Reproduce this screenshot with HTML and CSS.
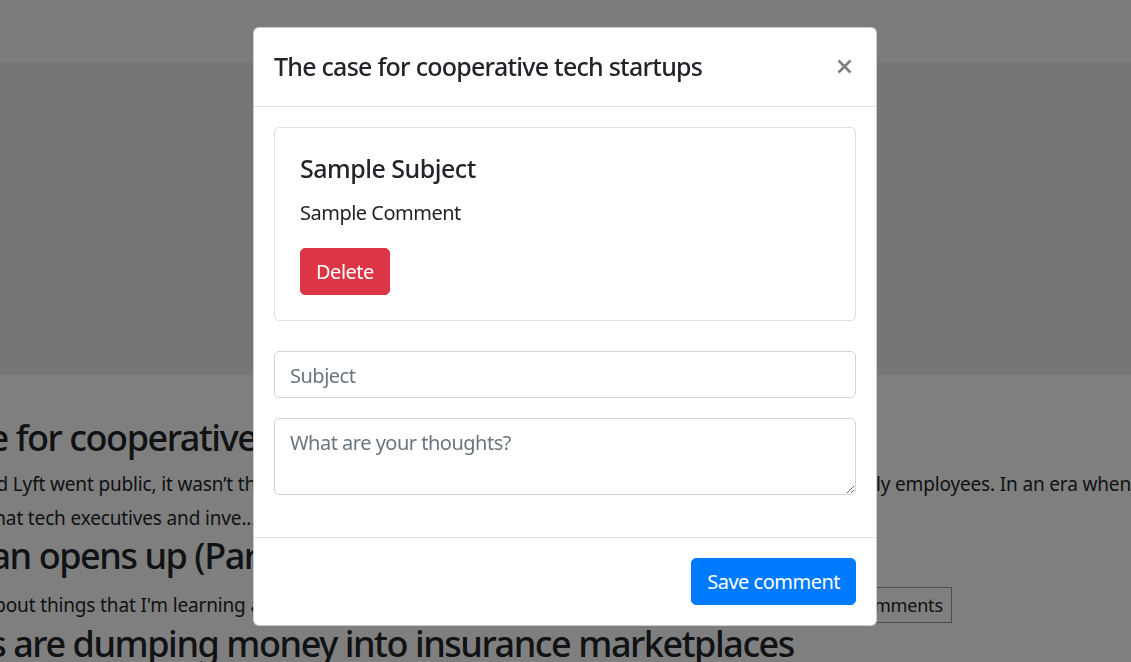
FILE: index.html
```html
<!DOCTYPE html>
<html lang="en">
<head>
<meta charset="utf-8">
<title>Blog</title>
<link rel="stylesheet" href="styles.css">
</head>
<body>
<nav class="navbar"></nav>
<header class="jumbotron"></header>
<main class="feed">
  <article class="post">
    <h3 class="post-title">The case for cooperative tech startups</h3>
    <p class="post-excerpt">When Uber and Lyft went public, it wasn’t the drivers who got richer. It was the investors, the founders, and the early employees. In an era when the gig economy keeps growing,<br>it’s now clear that tech executives and inve...</p>
  </article>
  <article class="post">
    <h3 class="post-title">A German opens up (Part 1)</h3>
    <div class="post-row">
      <p class="post-excerpt post-excerpt-short">Here I wrote about things that I'm learning as I go, mostly software and startups...</p>
      <button class="btn-comments" type="button">Comments</button>
    </div>
  </article>
  <article class="post">
    <h3 class="post-title">Advisors are dumping money into insurance marketplaces</h3>
  </article>
</main>

<div class="modal-backdrop"></div>
<div class="modal">
  <div class="modal-dialog">
    <div class="modal-content">
      <div class="modal-header">
        <h5 class="modal-title">The case for cooperative tech startups</h5>
        <button class="close" type="button" aria-label="Close">
          <svg class="close-icon" width="15" height="15" viewBox="0 0 15 15" aria-hidden="true">
            <path d="M1.5 1.5 L13.5 13.5 M13.5 1.5 L1.5 13.5" stroke="#000" stroke-width="2.6" fill="none"/>
          </svg>
        </button>
      </div>
      <div class="modal-body">
        <div class="card">
          <div class="card-body">
            <h5 class="card-title">Sample Subject</h5>
            <p class="card-text">Sample Comment</p>
            <button class="btn btn-danger" type="button">Delete</button>
          </div>
        </div>
        <form class="comment-form">
          <div class="form-group">
            <input class="form-control" type="text" placeholder="Subject">
          </div>
          <div class="form-group">
            <textarea class="form-control form-textarea" rows="2" placeholder="What are your thoughts?"></textarea>
          </div>
        </form>
      </div>
      <div class="modal-footer">
        <button class="btn btn-primary" type="button">Save comment</button>
      </div>
    </div>
  </div>
</div>
</body>
</html>
```

FILE: styles.css
```css
* {
  box-sizing: border-box;
}

html, body {
  margin: 0;
  padding: 0;
  overflow: hidden;
  height: 100%;
}

body {
  font-family: "Noto Sans", "Open Sans", sans-serif;
  font-size: 20px;
  line-height: 30px;
  color: #212529;
  background: #fff;
  letter-spacing: -0.025em;
}

.navbar {
  height: 62px;
  background: #f8f9fa;
}

.jumbotron {
  height: 313px;
  background: #e9ecef;
  margin-bottom: 42px;
}

.feed {
  width: 1600px;
  margin-left: -130px;
}

.post-title {
  margin: 0 0 8px;
  font-size: 36px;
  line-height: 42px;
  font-weight: 500;
  letter-spacing: -0.04em;
  white-space: nowrap;
}

.post-excerpt {
  margin: 0;
  font-size: 19px;
  line-height: 34px;
  letter-spacing: -0.008em;
  white-space: nowrap;
}

.post-row {
  display: flex;
  align-items: center;
  height: 36px;
  margin-top: 10px;
}

.post-excerpt-short {
  flex: 0 0 973px;
  overflow: hidden;
}

.btn-comments {
  font-family: inherit;
  font-size: 18px;
  line-height: 34px;
  letter-spacing: -0.01em;
  color: #212529;
  background: transparent;
  border: 1px solid #9a9a9a;
  padding: 0 8px;
  margin: 0;
}

/* Modal */
.modal-backdrop {
  position: fixed;
  inset: 0;
  background: rgba(0, 0, 0, 0.5);
}

.modal {
  position: fixed;
  inset: 0;
  padding-right: 1px;
}

.modal-dialog {
  width: 624px;
  margin: 27px auto 0;
}

.modal-content {
  background: #fff;
  border: 1px solid rgba(0, 0, 0, 0.2);
  border-radius: 6px;
}

.modal-header {
  display: flex;
  align-items: flex-start;
  justify-content: space-between;
  padding: 20px;
  border-bottom: 1px solid #dee2e6;
}

.modal-title {
  margin: 0;
  font-size: 25px;
  line-height: 37.5px;
  font-weight: 500;
  letter-spacing: -0.03em;
}

.close {
  display: flex;
  padding: 0;
  margin: 11px 4px 0 auto;
  border: 0;
  background: transparent;
  opacity: 0.5;
}

.close-icon {
  display: block;
}

.modal-body {
  padding: 20px 20px 22px;
}

.card {
  border: 1px solid rgba(0, 0, 0, 0.125);
  border-radius: 5px;
  margin-bottom: 30px;
}

.card-body {
  padding: 25px;
}

.card-title {
  margin: 0 0 15px;
  font-size: 25px;
  line-height: 30px;
  font-weight: 500;
}

.card-text {
  margin: 0 0 20px;
}

.btn {
  font-family: inherit;
  font-size: 20px;
  line-height: 30px;
  letter-spacing: -0.025em;
  padding: 8.5px 15px 6.5px;
  border: 1px solid transparent;
  border-radius: 5px;
  color: #fff;
  display: inline-block;
}

.btn-danger {
  background: #dc3545;
  border-color: #dc3545;
}

.btn-primary {
  background: #007bff;
  border-color: #007bff;
}

.comment-form {
  margin: 0;
}

.form-group {
  margin-bottom: 20px;
}

.form-control {
  display: block;
  width: 100%;
  font-family: inherit;
  font-size: 20px;
  line-height: 30px;
  letter-spacing: -0.025em;
  color: #495057;
  padding: 8.5px 15px 6.5px;
  border: 1px solid #ced4da;
  border-radius: 5px;
  background: #fff;
  margin: 0;
}

input.form-control {
  height: 47px;
}

.form-textarea {
  padding-top: 9.5px;
  padding-bottom: 5.5px;
  resize: vertical;
  overflow: auto;
}

.form-control::placeholder {
  color: #6c757d;
  opacity: 1;
}

.modal-footer {
  display: flex;
  justify-content: flex-end;
  padding: 15px;
  border-top: 1px solid #dee2e6;
}

.modal-footer > .btn {
  margin: 5px;
}
```
